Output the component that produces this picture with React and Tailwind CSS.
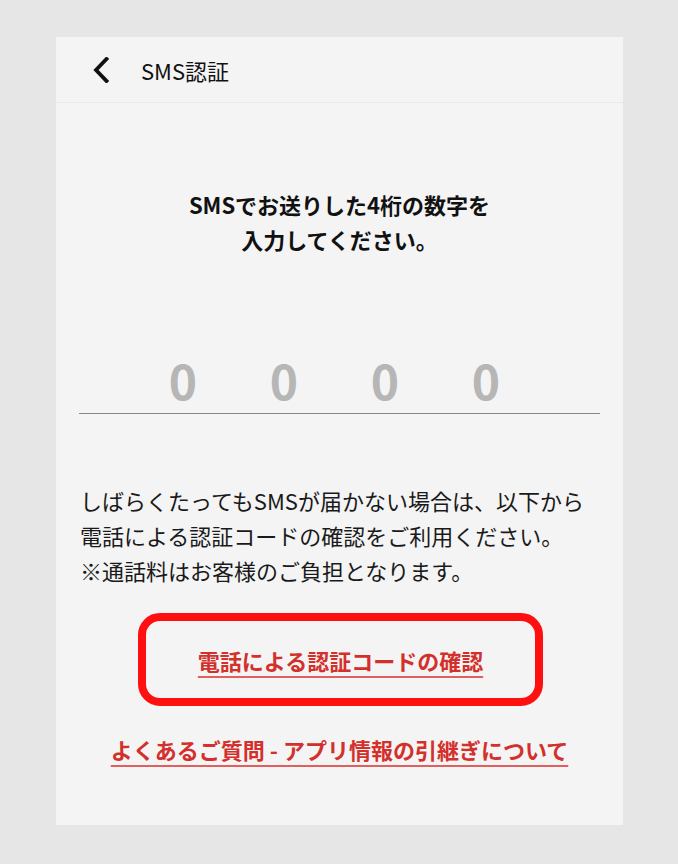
export default function App() {
  const digits = ['0', '0', '0', '0']

  return (
    <div
      className="w-[678px] h-[864px] bg-[#e6e6e6] pt-[37px] pl-[56px]"
      style={{ fontFamily: '"Noto Sans CJK JP", "Noto Sans", sans-serif' }}
    >
      <div className="w-[567px] h-[788px] bg-[#f4f4f4] flex flex-col">
        <header className="h-[66px] border-b border-[#e9e9e9] flex items-center pl-[36px]">
          <svg width="18" height="26" viewBox="0 0 18 26" className="shrink-0">
            <path d="M14.5 2 L4 13 L14.5 24" fill="none" stroke="#111" strokeWidth="3.8" strokeLinecap="square" />
          </svg>
          <h1 className="ml-[31px] text-[22px] leading-none text-[#111]">SMS認証</h1>
        </header>

        <p className="mt-[84px] text-center text-[22px] leading-[35px] font-bold text-[#111]">
          SMSでお送りした4桁の数字を
          <br />
          入力してください。
        </p>

        <div className="mt-[94px] mx-[23px] border-b border-[#888] flex justify-center pr-[10px] pb-[6px]">
          {digits.map((d, i) => (
            <span key={i} className="w-[101px] text-center text-[48px] leading-[56px] font-semibold text-[#b6b6b6]">
              {d}
            </span>
          ))}
        </div>

        <p className="mt-[69px] pl-[24px] text-[22px] leading-[35px] text-[#1a1a1a]">
          しばらくたってもSMSが届かない場合は、以下から
          <br />
          電話による認証コードの確認をご利用ください。
          <br />
          ※通話料はお客様のご負担となります。
        </p>

        <div className="mt-[25px] ml-[82px] w-[405px] h-[93px] border-[8px] border-[#ff1010] rounded-[22px] flex items-center justify-center">
          <a href="#" className="text-[22px] leading-none font-bold text-[#d3302c] underline decoration-[#e06060] decoration-2 underline-offset-[6px]">
            電話による認証コードの確認
          </a>
        </div>

        <div className="mt-[32px] text-center">
          <a href="#" className="text-[22px] leading-none font-bold text-[#d3302c] underline decoration-[#e06060] decoration-2 underline-offset-[6px]">
            よくあるご質問 - アプリ情報の引継ぎについて
          </a>
        </div>
      </div>
    </div>
  )
}
